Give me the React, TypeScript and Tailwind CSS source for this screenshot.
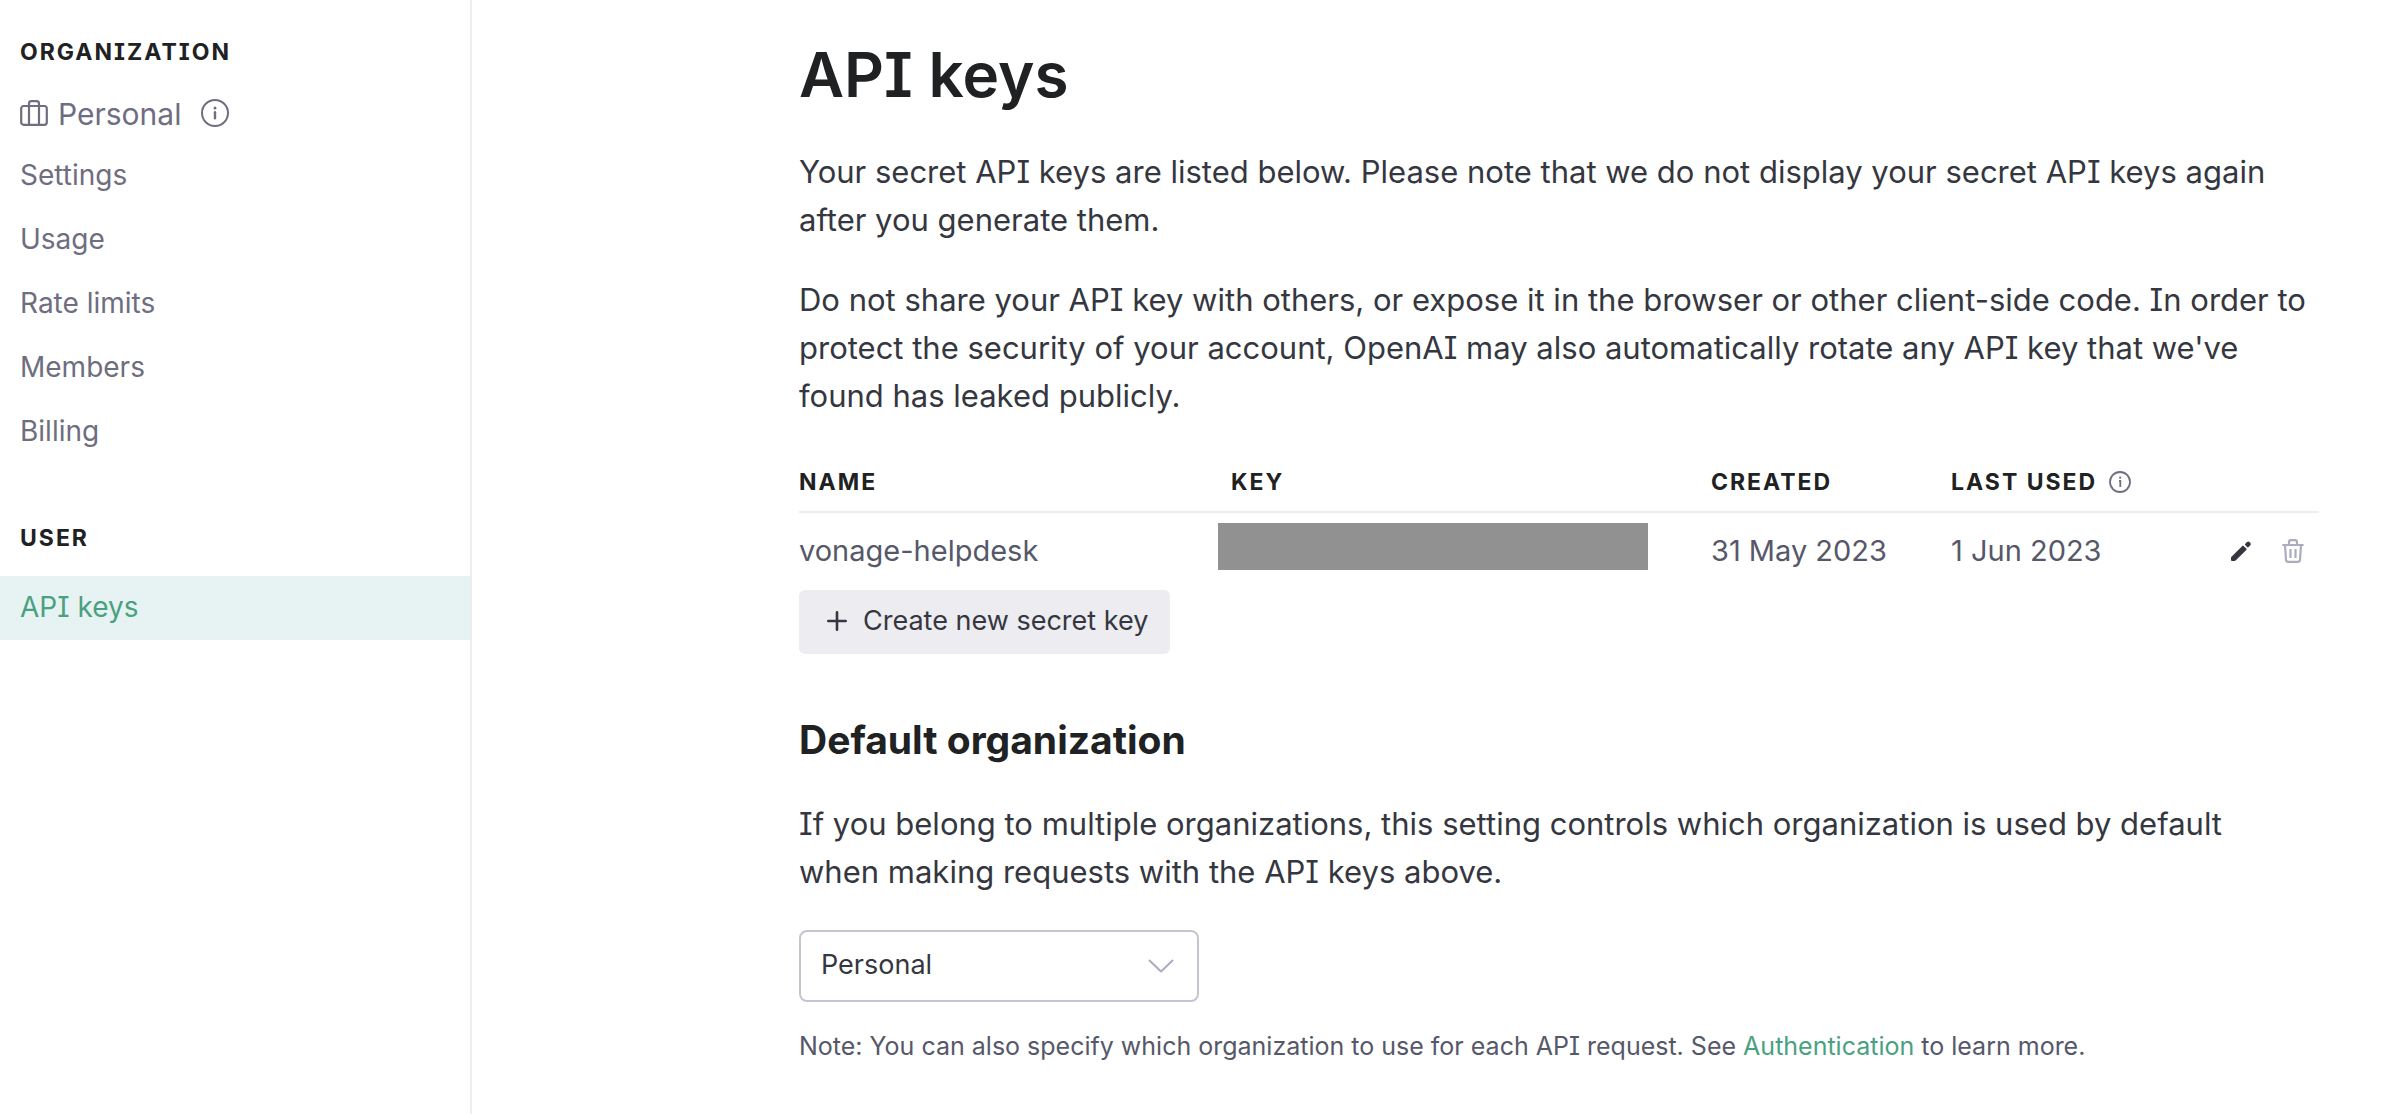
import type { ReactNode } from "react";

function InfoIcon({ className }: { className: string }) {
  return (
    <svg viewBox="0 0 28 28" fill="none" stroke="currentColor" strokeWidth="2" className={className} aria-hidden="true">
      <circle cx="14" cy="14" r="13" />
      <path d="M14 13.2v6" strokeWidth="2.4" strokeLinecap="round" />
      <circle cx="14" cy="9" r="1.5" fill="currentColor" stroke="none" />
    </svg>
  );
}

function SmallInfoIcon({ className }: { className: string }) {
  return (
    <svg viewBox="0 0 22 22" fill="none" stroke="currentColor" strokeWidth="1.8" className={className} aria-hidden="true">
      <circle cx="11" cy="11" r="10" />
      <path d="M10 10h1.3v6" />
      <path d="M10.2 6.6h2" strokeWidth="2" />
    </svg>
  );
}

function SuitcaseIcon() {
  return (
    <svg viewBox="0 0 28 26" fill="none" stroke="currentColor" strokeWidth="2.2" strokeLinejoin="round" className="h-[26px] w-7 shrink-0" aria-hidden="true">
      <rect x="1.2" y="6" width="25.6" height="18.8" rx="2.5" />
      <path d="M9 25V3.500A2.500 2.500 0 0 1 11.500 1.200h5A2.500 2.500 0 0 1 19 3.500V25" />
    </svg>
  );
}

function PencilIcon() {
  return (
    <svg viewBox="0 0 20 20" fill="currentColor" className="size-5" aria-hidden="true">
      <path d="M0 16.200 11.300 4.900a.9.9 0 0 1 1.300 0l2.700 2.700a.9.9 0 0 1 0 1.300L4.600 19.600a1.400 1.400 0 0 1-1 .4H1a1 1 0 0 1-1-1z" />
      <path d="M14.200 2.900 15.900 1.100a2.400 2.400 0 0 1 3.300 3.400L17.300 6.200a.7.700 0 0 1-1 0l-2.100-2.200a.8.800 0 0 1 0-1.100z" />
    </svg>
  );
}

function TrashIcon() {
  return (
    <svg viewBox="0 0 22 24" fill="none" stroke="currentColor" strokeWidth="2.2" strokeLinejoin="round" className="h-6 w-[22px]" aria-hidden="true">
      <path d="M1.200 6h19.600" strokeLinecap="round" />
      <path d="M7 6V3.200a2 2 0 0 1 2-2h4a2 2 0 0 1 2 2V6" />
      <path d="M3 6l1 14.700A2.200 2.200 0 0 0 6.200 22.800h9.600a2.200 2.200 0 0 0 2.200-2.100L19 6" />
      <path d="M8.500 10v9M13.500 10v9" />
    </svg>
  );
}

const organizationLinks = ["Settings", "Usage", "Rate limits", "Members", "Billing"];

function SidebarHeading({ children }: { children: ReactNode }) {
  return <h2 className="px-5 text-[23px] leading-9 font-bold tracking-[2px] text-[#202123] uppercase">{children}</h2>;
}

function HeaderCell({ className, children }: { className: string; children?: ReactNode }) {
  return (
    <th scope="col" className={`h-[61px] border-b-2 border-[#ececf1] p-0 text-[23px] leading-9 font-bold tracking-[2px] text-[#202123] uppercase ${className}`}>
      {children}
    </th>
  );
}

export default function App() {
  return (
    <div className="flex min-h-screen bg-white font-['Inter',sans-serif] text-[#353740] [font-feature-settings:'cv08']">
      <nav className="w-[472px] shrink-0 border-r-2 border-[#ececf1] pt-[34px] text-[#6e6e80]">
        <SidebarHeading>Organization</SidebarHeading>
        <div className="mt-3 flex h-[62px] items-center px-5 text-[30px]">
          <SuitcaseIcon />
          <span className="ml-2.5 pt-0.5">Personal</span>
          <button type="button" aria-label="About this organization" className="ml-5">
            <InfoIcon className="size-7" />
          </button>
        </div>
        <ul className="text-[28px] leading-[62px]">
          {organizationLinks.map((label) => (
            <li key={label}>
              <a href="#" className="block px-5 pb-0.5">{label}</a>
            </li>
          ))}
        </ul>
        <div className="mt-14">
          <SidebarHeading>User</SidebarHeading>
        </div>
        <a href="#" aria-current="page" className="mt-5 block bg-[#e7f3f3] px-5 pb-0.5 text-[28px] leading-[62px] text-[#4aa181]">
          API keys
        </a>
      </nav>

      <main className="min-w-0 flex-1 pt-9 pr-[67px] pl-[327px] text-[31px] leading-[48px]">
        <h1 className="text-[62px] leading-[78px] font-semibold text-[#202123]">API keys</h1>
        <p className="mt-[34px]">
          Your secret API keys are listed below. Please note that we do not display your secret API keys again after you generate them.
        </p>
        <p className="mt-8">
          Do not share your API key with others, or expose it in the browser or other client-side code. In order to protect the security of your account, OpenAI may also automatically rotate any API key that we've found has leaked publicly.
        </p>

        <table className="mt-8 w-full table-fixed border-separate border-spacing-0 text-left">
          <thead>
            <tr>
              <HeaderCell className="w-[432px]">Name</HeaderCell>
              <HeaderCell className="w-[480px]">Key</HeaderCell>
              <HeaderCell className="w-[240px]">Created</HeaderCell>
              <HeaderCell className="w-[224px]">
                <span className="flex items-center gap-3 whitespace-nowrap">
                  Last used
                  <SmallInfoIcon className="size-[22px] shrink-0 text-[#6e6e80]" />
                </span>
              </HeaderCell>
              <HeaderCell className="" />
            </tr>
          </thead>
          <tbody className="align-top text-[29px] text-[#565869]">
            <tr className="h-[77px]">
              <td className="pt-3.5">vonage-helpdesk</td>
              <td className="pt-2.5">
                <div className="-ml-[13px] h-[47px] w-[430px] bg-[#919191]" />
              </td>
              <td className="pt-3.5">31 May 2023</td>
              <td className="pt-3.5">1 Jun 2023</td>
              <td className="pt-3.5">
                <div className="flex h-12 items-center justify-end gap-[31px] pr-[15px]">
                  <button type="button" aria-label="Edit key" className="text-[#353740]"><PencilIcon /></button>
                  <button type="button" aria-label="Delete key" className="text-[#acacbe]"><TrashIcon /></button>
                </div>
              </td>
            </tr>
          </tbody>
        </table>

        <button type="button" className="flex h-16 items-center gap-4 rounded-md bg-[#ececf1] pr-[22px] pb-0.5 pl-7 text-[27px]">
          <svg viewBox="0 0 20 20" stroke="currentColor" strokeWidth="2.600" strokeLinecap="round" className="size-5" aria-hidden="true">
            <path d="M10 1.300v17.400M1.300 10h17.400" />
          </svg>
          Create new secret key
        </button>

        <h2 id="default-organization" className="mt-[62px] text-[39px] leading-[48px] font-bold text-[#202123]">Default organization</h2>
        <p className="mt-9">
          If you belong to multiple organizations, this setting controls which organization is used by default when&nbsp;making requests with the API keys above.
        </p>

        <div className="relative mt-[34px] w-[400px]">
          <select aria-labelledby="default-organization" className="block h-[72px] w-full appearance-none rounded-lg border-2 border-[#c5c5d2] bg-white px-5 pb-0.5 text-[27px]">
            <option>Personal</option>
          </select>
          <svg viewBox="0 0 26 14" fill="none" stroke="currentColor" strokeWidth="2" strokeLinecap="round" strokeLinejoin="round" className="pointer-events-none absolute top-[29px] right-[25px] h-3.5 w-[26px] text-[#acacbe]" aria-hidden="true">
            <path d="M1.500 1.500 13 12.500 24.500 1.500" />
          </svg>
        </div>

        <p className="mt-5 text-[25px] text-[#565869]">
          Note: You can also specify which organization to use for each API request. See <a href="#" className="text-[#4aa181]">Authentication</a> to learn more.
        </p>
      </main>
    </div>
  );
}
